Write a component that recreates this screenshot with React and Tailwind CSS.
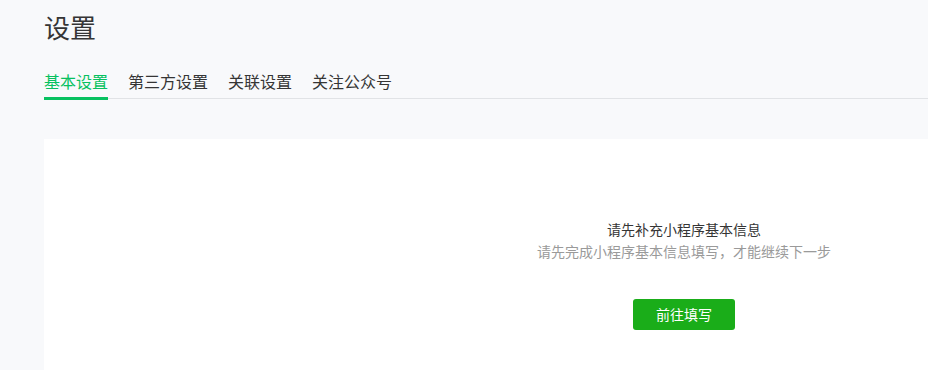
const tabs = ['基本设置', '第三方设置', '关联设置', '关注公众号']

export default function App() {
  return (
    <div
      className="w-full h-[370px] overflow-hidden bg-[#f8f9fb]"
      style={{ fontFamily: '"Noto Sans CJK SC", "Noto Sans", sans-serif' }}
    >
      <div className="w-[1324px] pl-[44px] pt-[9px]">
        {/* 标题 */}
        <h1 className="text-[26px] leading-[36px] text-[#353535] font-normal">设置</h1>

        {/* 标签页 */}
        <div className="mt-[24px] flex gap-[20px] border-b border-[#e1e3e6]">
          {tabs.map((t, i) => (
            <div
              key={t}
              className={`text-[16px] leading-[24px] pb-[4px] border-b-[3px] -mb-[2px] cursor-pointer ${
                i === 0 ? 'text-[#07c160] border-[#07c160]' : 'text-[#353535] border-transparent'
              }`}
            >
              {t}
            </div>
          ))}
        </div>

        {/* 内容卡片 */}
        <div className="mt-[40px] bg-white h-[300px] flex flex-col items-center pt-[80px]">
          <p className="text-[14px] leading-[20px] text-[#353535]">请先补充小程序基本信息</p>
          <p className="mt-[2px] text-[14px] leading-[20px] text-[#9a9a9a]">
            请先完成小程序基本信息填写，才能继续下一步
          </p>
          <button className="mt-[38px] w-[102px] h-[31px] rounded-[3px] bg-[#1aad19] text-white text-[14px] leading-[31px]">
            前往填写
          </button>
        </div>
      </div>
    </div>
  )
}
